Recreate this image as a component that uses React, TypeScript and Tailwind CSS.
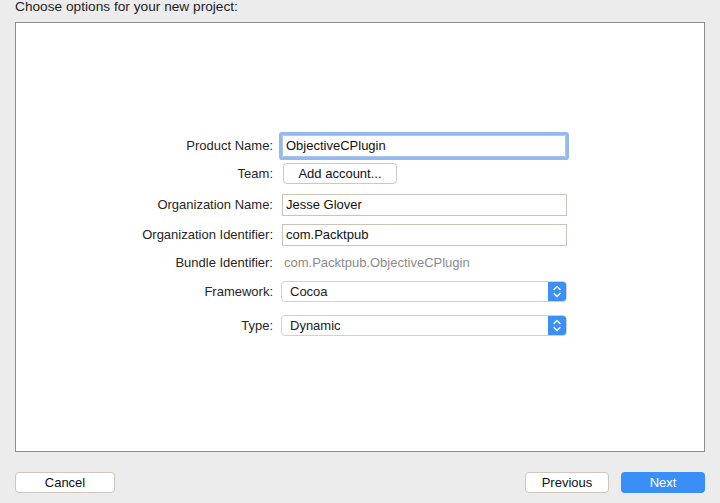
import React from "react";

const Chevrons = () => (
  <svg width="18" height="21" viewBox="0 0 18 21" fill="none">
    <path d="M6 8.5 L9 5.5 L12 8.5" stroke="white" strokeWidth="1.4" strokeLinecap="round" strokeLinejoin="round" />
    <path d="M6 12.5 L9 15.5 L12 12.5" stroke="white" strokeWidth="1.4" strokeLinecap="round" strokeLinejoin="round" />
  </svg>
);

const Label = ({ children }: { children: React.ReactNode }) => (
  <div className="w-[257px] shrink-0 text-right pr-0 text-[#262626]">{children}</div>
);

const Select = ({ value }: { value: string }) => (
  <div className="w-[286px] h-[21px] flex rounded-[4px] border border-[#d6d0c7] bg-white overflow-hidden">
    <div className="flex-1 flex items-center pl-[8px] text-[#222]">{value}</div>
    <div className="w-[18px] h-full bg-[#3c8ff6] flex items-center justify-center">
      <Chevrons />
    </div>
  </div>
);

export default function App() {
  return (
    <div
      className="w-[720px] h-[503px] bg-[#ececec] px-[15px] flex flex-col text-[13px] text-[#222]"
      style={{ fontFamily: '"Liberation Sans", Arial, sans-serif' }}
    >
      <div className="h-[22px] text-[13.7px] leading-[14px] text-[#1e1e1e]">Choose options for your new project:</div>
      <div className="w-[690px] h-[430px] border border-[#8e8e8e] bg-white pt-[112px] flex flex-col">
        <div className="flex items-center h-[22px] gap-[8px]">
          <Label>Product Name:</Label>
          <div className="ml-[1px] w-[284px] h-[22px] border border-[#a9c6f0] rounded-[1px] shadow-[0_0_0_3px_#93b9ee] flex items-center pl-[3px] text-[#111]">
            ObjectiveCPlugin
          </div>
        </div>
        <div className="flex items-center h-[21px] gap-[8px] mt-[6px]">
          <Label>Team:</Label>
          <div className="ml-[2px] w-[114px] h-[21px] rounded-[4px] border border-[#cdc7bd] bg-white flex items-center justify-center text-[#111]">
            Add account...
          </div>
        </div>
        <div className="flex items-center h-[22px] gap-[8px] mt-[10px]">
          <Label>Organization Name:</Label>
          <div className="ml-[1px] w-[285px] h-[22px] border border-[#cbc3b8] flex items-center pl-[3px] text-[#111]">
            Jesse Glover
          </div>
        </div>
        <div className="flex items-center h-[22px] gap-[8px] mt-[8px]">
          <Label>Organization Identifier:</Label>
          <div className="ml-[1px] w-[285px] h-[22px] border border-[#cbc3b8] flex items-center pl-[3px] text-[#111]">
            com.Packtpub
          </div>
        </div>
        <div className="flex items-center h-[20px] gap-[8px] mt-[7px]">
          <Label>Bundle Identifier:</Label>
          <div className="ml-[3px] text-[#8b8b8b]">com.Packtpub.ObjectiveCPlugin</div>
        </div>
        <div className="flex items-center h-[21px] gap-[8px] mt-[8px]">
          <Label>Framework:</Label>
          <Select value="Cocoa" />
        </div>
        <div className="flex items-center h-[21px] gap-[8px] mt-[13px]">
          <Label>Type:</Label>
          <Select value="Dynamic" />
        </div>
      </div>
      <div className="mt-[20px] flex h-[21px]">
        <div className="w-[100px] h-[21px] rounded-[4px] border border-[#cdc7bd] bg-white flex items-center justify-center text-[#111]">
          Cancel
        </div>
        <div className="flex-1" />
        <div className="w-[84px] h-[21px] rounded-[4px] border border-[#cdc7bd] bg-white flex items-center justify-center text-[#111]">
          Previous
        </div>
        <div className="ml-[12px] w-[84px] h-[21px] rounded-[4px] bg-[#3a8ff6] flex items-center justify-center text-white">
          Next
        </div>
      </div>
    </div>
  );
}
